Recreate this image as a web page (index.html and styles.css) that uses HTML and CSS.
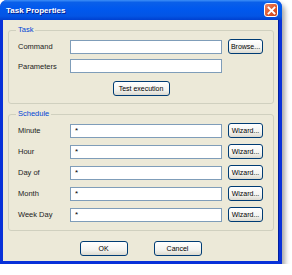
FILE: index.html
```html
<!DOCTYPE html>
<html lang="en">

<head>
    <meta charset="UTF-8">
    <meta name="viewport" content="width=device-width, initial-scale=1.0">
    <title>Task Properties</title>
    <link rel="stylesheet" href="styles.css">
</head>

<body>
    <div class="window">
        <div class="titlebar">
            <span class="title">Task Properties</span>
            <span class="close">
                <svg width="9" height="9" viewBox="0 0 9 9">
                    <path d="M1.5 1.5 L7.5 7.5 M7.5 1.5 L1.5 7.5" stroke="#fff" stroke-width="1.8" stroke-linecap="square" />
                </svg>
            </span>
        </div>

        <div class="client">
            <fieldset class="group">
                <legend>Task</legend>
                <div class="row">
                    <label>Command</label>
                    <input class="field" type="text" value="">
                    <button class="btn">Browse...</button>
                </div>
                <div class="row">
                    <label>Parameters</label>
                    <input class="field" type="text" value="">
                </div>
                <div class="row-center">
                    <button class="btn btn-test">Test execution</button>
                </div>
            </fieldset>

            <fieldset class="group schedule">
                <legend>Schedule</legend>
                <div class="row">
                    <label>Minute</label>
                    <input class="field" type="text" value="*">
                    <button class="btn">Wizard...</button>
                </div>
                <div class="row">
                    <label>Hour</label>
                    <input class="field" type="text" value="*">
                    <button class="btn">Wizard...</button>
                </div>
                <div class="row">
                    <label>Day of</label>
                    <input class="field" type="text" value="*">
                    <button class="btn">Wizard...</button>
                </div>
                <div class="row">
                    <label>Month</label>
                    <input class="field" type="text" value="*">
                    <button class="btn">Wizard...</button>
                </div>
                <div class="row">
                    <label>Week Day</label>
                    <input class="field" type="text" value="*">
                    <button class="btn">Wizard...</button>
                </div>
            </fieldset>

            <div class="actions">
                <button class="btn btn-action">OK</button>
                <button class="btn btn-action">Cancel</button>
            </div>
        </div>
    </div>
</body>

</html>
```

FILE: styles.css
```css
body {
    margin: 0;
    background: #fff;
    font-family: 'Liberation Sans', Arial, sans-serif;
}

.window {
    width: 282px;
    height: 264px;
    box-sizing: border-box;
    display: flex;
    flex-direction: column;
    border-radius: 7px 7px 0 0;
    box-shadow: 3px 4px 5px rgba(0, 0, 0, 0.35);
    background: #0831d9;
}

.titlebar {
    height: 20px;
    flex: none;
    display: flex;
    align-items: center;
    justify-content: space-between;
    padding: 0 4px 0 6px;
    border-radius: 7px 7px 0 0;
    background: linear-gradient(to bottom, #3d8ff7 0%, #0a5fe9 12%, #0058ee 45%, #0355e5 80%, #0040d0 100%);
}

.title {
    color: #fff;
    font-weight: bold;
    font-size: 8px;
    text-shadow: 1px 1px 0 #0a1e8c;
}

.close {
    width: 14px;
    height: 14px;
    box-sizing: border-box;
    display: flex;
    align-items: center;
    justify-content: center;
    border: 1px solid #fff;
    border-radius: 3px;
    background: linear-gradient(135deg, #e9856a 0%, #e25c2f 50%, #c8401a 100%);
}

.client {
    flex: 1;
    margin: 0 3px 3px 3px;
    padding: 5px 5px 0 5px;
    background: #ece9d8;
    border-right: 1px solid #001ea0;
}

.group {
    margin: 0;
    padding: 4px 10px 7px 9px;
    border: 1px solid #d0d0bf;
    border-radius: 3px;
    display: flex;
    flex-direction: column;
    gap: 6px;
}

.group legend {
    padding: 0 2px;
    margin-left: -2px;
    font-size: 7.5px;
    line-height: 10px;
    color: #0046d5;
}

.schedule {
    margin-top: 5px;
    padding-bottom: 9px;
    gap: 7px;
}

.row {
    display: grid;
    grid-template-columns: 46px 152px 35px;
    column-gap: 6px;
    align-items: center;
    height: 14px;
}

.row label {
    font-size: 7.5px;
    color: #222;
}

.field {
    height: 14px;
    box-sizing: border-box;
    margin: 0;
    padding: 0 0 0 4px;
    border: 1px solid #7f9db9;
    background: #fff;
    font-family: 'Liberation Sans', Arial, sans-serif;
    font-size: 8px;
    color: #000;
}

.row-center {
    display: flex;
    justify-content: center;
    margin-top: 2px;
}

.btn {
    height: 15px;
    box-sizing: border-box;
    margin: 0;
    padding: 0;
    border: 1px solid #003c74;
    border-radius: 3px;
    background: linear-gradient(to bottom, #ffffff 0%, #f4f4f0 60%, #dcdad0 100%);
    font-family: 'Liberation Sans', Arial, sans-serif;
    font-size: 7px;
    color: #000;
}

.btn-test {
    width: 57px;
    margin-left: 1px;
}

.actions {
    display: flex;
    justify-content: center;
    gap: 26px;
    margin-top: 10px;
}

.btn-action {
    width: 48px;
}
```
